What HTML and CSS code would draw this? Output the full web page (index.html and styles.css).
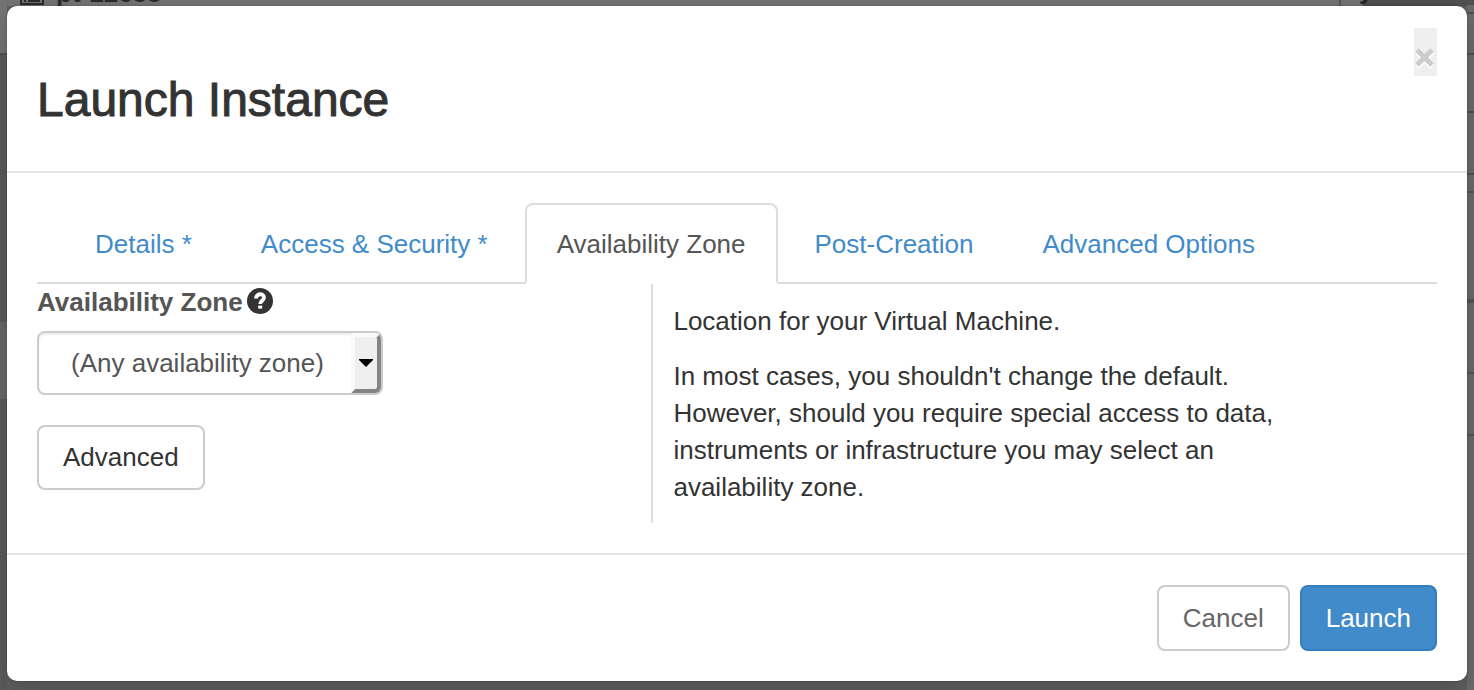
FILE: index.html
```html
<!DOCTYPE html>
<html lang="en">
<head>
<meta charset="utf-8">
<title>Launch Instance</title>
<link rel="stylesheet" href="styles.css">
</head>
<body>
<div class="backdrop" aria-hidden="true">
  <div class="page-left"></div>
  <div class="page-top">
    <svg class="page-icon" width="24" height="5" viewBox="0 0 24 5"><path d="M1 0V4H23V0M4 1H6M8 1H20" fill="none" stroke="#2b2b2b" stroke-width="2"/></svg>
    <span class="page-name">pt-12688</span>
  </div>
  <div class="page-cell"><span class="page-tail">y</span></div>
  <div class="page-right"></div>
</div>
<main class="modal" role="dialog" aria-labelledby="title">
  <header class="modal-header">
    <h3 class="modal-title" id="title">Launch Instance</h3>
    <button class="close" type="button" aria-label="Close"><svg width="23" height="23" viewBox="0 0 23 23"><path d="M3 5L18 20M18 5L3 20" stroke="#fff" stroke-width="5"/><path d="M3 3L18 18M18 3L3 18" stroke="#ccc" stroke-width="5"/></svg></button>
  </header>
  <div class="modal-body">
    <nav class="tabs">
      <a class="tab" href="#details">Details *</a>
      <a class="tab" href="#access">Access &amp; Security *</a>
      <a class="tab tab-active" href="#zone" aria-current="page">Availability Zone</a>
      <a class="tab" href="#post">Post-Creation</a>
      <a class="tab" href="#advanced">Advanced Options</a>
    </nav>
    <div class="columns">
      <form class="fields" id="zone-form">
        <div class="label-row">
          <label for="zone">Availability Zone</label>
          <svg width="26" height="26" viewBox="0 0 26 26" role="img" aria-label="Help"><circle cx="13" cy="13" r="13" fill="#333"/><path d="M9 10.400C9 5 17 5 17 9.500C17 12.500 13.200 12.500 13.200 16" fill="none" stroke="#fff" stroke-width="3.800"/><path d="M11.200 17.600H15.200V20.600H11.200Z" fill="#fff"/></svg>
        </div>
        <div class="select-wrap">
          <select class="select" id="zone"><option>(Any availability zone)</option></select>
          <span class="select-arrow"><svg width="14" height="8" viewBox="0 0 14 8"><path d="M0 0H14V1L7 8L0 1Z" fill="#000"/></svg></span>
        </div>
        <button class="btn btn-advanced" type="button">Advanced</button>
      </form>
      <section class="help">
        <p>Location for your Virtual Machine.</p>
        <p>In most cases, you shouldn't change the default. However, should you require special access to data, instruments or infrastructure you may select an availability zone.</p>
      </section>
    </div>
  </div>
  <footer class="modal-footer">
    <button class="btn btn-cancel" type="button">Cancel</button>
    <button class="btn btn-primary" type="submit" form="zone-form">Launch</button>
  </footer>
</main>
</body>
</html>
```
FILE: styles.css
```css
* { box-sizing: border-box; }
body {
  margin: 0;
  min-height: 100vh;
  overflow: hidden;
  background: #606060;
  color: #333;
  font: 26px/37px "Liberation Sans", Arial, sans-serif;
}
.backdrop {
  position: absolute;
  inset: 0;
  display: grid;
  grid-template-columns: 7px 1fr 128px 7px;
  overflow: hidden;
}
.page-left {
  background: linear-gradient(#747474 0 53px, #505050 53px 55px, #5b5b5b 55px 322px, #686868 322px 399px, #5b5b5b 399px);
}
.page-top {
  display: flex;
  gap: 12px;
  height: 6px;
  padding-left: 13px;
  overflow: hidden;
  background: #747474;
}
.page-icon { flex: none; }
.page-name { margin-top: -22px; font-weight: bold; line-height: 30px; color: #2b2b2b; }
.page-cell {
  height: 6px;
  padding-left: 18px;
  overflow: hidden;
  border-left: 2px solid #555;
  background: linear-gradient(90deg, #747474 0 22px, #505050 22px);
}
.page-tail { display: block; margin-top: -25px; font-weight: bold; line-height: 30px; color: #222; }
.page-right {
  background: linear-gradient(#505050 0 5px, #6b6b6b 5px 12px, #505050 12px 14px, #6b6b6b 14px 53px, #505050 53px 55px, #6b6b6b 55px 111px, #505050 111px 113px, #6b6b6b 113px 173px, #505050 173px 175px, #6b6b6b 175px 191px, #555 191px 193px, #6b6b6b 193px 299px, #555 299px 303px, #6b6b6b 303px 372px, #555 372px 374px, #6b6b6b 374px 434px, #555 434px 436px, #6b6b6b 436px);
}
.modal {
  position: relative;
  margin: 6px 7px 9px;
  border-radius: 10px;
  background: #fff;
  box-shadow: 0 10px 30px rgba(0, 0, 0, .2), 0 0 2px rgba(0, 0, 0, .3);
}
.modal-header {
  display: flex;
  align-items: flex-start;
  justify-content: space-between;
  padding: 22px 30px 44px;
  border-bottom: 2px solid #e5e5e5;
}
.modal-title {
  margin: 45px 0 0;
  font-size: 48px;
  font-weight: normal;
  line-height: 54px;
  -webkit-text-stroke: 1px #333;
}
.close {
  display: flex;
  align-items: center;
  width: 23px;
  height: 48px;
  padding: 12px 0 0;
  border: 0;
  background: #efefef;
}
.modal-body { padding: 30px; }
.tabs {
  display: flex;
  gap: 5px;
  padding-left: 26px;
  border-bottom: 2px solid #ddd;
}
.tab {
  margin-bottom: -2px;
  padding: 21px 30px 19px;
  border: 2px solid transparent;
  border-radius: 8px 8px 0 0;
  color: #428bca;
  text-decoration: none;
}
.tab-active {
  border-color: #ddd #ddd #fff;
  background: #fff;
  color: #555;
}
.columns { display: grid; grid-template-columns: 79fr 86fr 15fr; }
.fields { display: flex; flex-direction: column; align-items: flex-start; }
.label-row {
  display: flex;
  align-items: flex-start;
  gap: 4px;
  margin-bottom: 10px;
  color: #555;
  font-weight: bold;
}
.label-row svg { margin-top: 4px; }
.select-wrap { position: relative; margin-bottom: 30px; }
.select {
  display: block;
  appearance: none;
  height: 64px;
  padding: 0 57px 0 32px;
  border: 2px solid #ccc;
  border-radius: 8px;
  background: #fff;
  box-shadow: inset 0 2px 2px rgba(0, 0, 0, .08);
  color: #555;
  font: inherit;
}
.select-arrow {
  position: absolute;
  top: 2px;
  right: 2px;
  bottom: 2px;
  display: flex;
  align-items: center;
  justify-content: center;
  width: 30px;
  border: 4px solid;
  border-color: #fafafa #858585 #858585 #fafafa;
  border-radius: 0 6px 6px 0;
  background: #efefef;
  pointer-events: none;
}
.btn {
  height: 66px;
  padding: 0 24px;
  border: 2px solid #ccc;
  border-radius: 8px;
  background: #fff;
  color: #333;
  font: inherit;
}
.btn-advanced { height: 65px; }
.btn-cancel { color: #666; }
.btn-primary { border-color: #357ebd; background: #428bca; color: #fff; }
.help { padding: 19px 20px 17px; border-left: 2px solid #ddd; }
.help p { margin: 0 0 18px; }
.help p:last-child { margin: 0; }
.modal-footer {
  display: flex;
  justify-content: flex-end;
  gap: 10px;
  padding: 30px;
  border-top: 2px solid #e5e5e5;
}
```
